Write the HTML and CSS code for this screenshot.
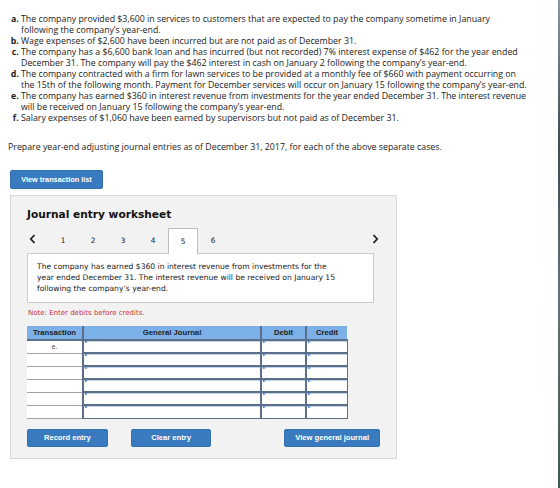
FILE: index.html
```html
<!DOCTYPE html>
<html lang="en">
<head>
    <meta charset="UTF-8">
    <meta name="viewport" content="width=device-width, initial-scale=1.0">
    <title>Adjusting Entries - Journal entry worksheet</title>
    <link rel="stylesheet" href="styles.css">
</head>
<body>
    <ol class="cases">
        <li>The company provided $3,600 in services to customers that are expected to pay the company sometime in January following the company’s year-end.</li>
        <li>Wage expenses of $2,600 have been incurred but are not paid as of December 31.</li>
        <li>The company has a $6,600 bank loan and has incurred (but not recorded) 7% interest expense of $462 for the year ended December 31. The company will pay the $462 interest in cash on January 2 following the company’s year-end.</li>
        <li>The company contracted with a firm for lawn services to be provided at a monthly fee of $660 with payment occurring on the 15th of the following month. Payment for December services will occur on January 15 following the company’s year-end.</li>
        <li>The company has earned $360 in interest revenue from investments for the year ended December 31. The interest revenue will be received on January 15 following the company’s year-end.</li>
        <li>Salary expenses of $1,060 have been earned by supervisors but not paid as of December 31.</li>
    </ol>

    <p class="prompt">Prepare year-end adjusting journal entries as of December 31, 2017, for each of the above separate cases.</p>

    <button class="btn btn-list" type="button">View transaction list</button>

    <section class="worksheet">
        <h2>Journal entry worksheet</h2>

        <nav class="steps">
            <span class="arrow">
                <svg width="7" height="10" viewBox="0 0 7 10"><path d="M5.5 1 L1.8 5 L5.5 9" fill="none" stroke="#222" stroke-width="1.8"/></svg>
            </span>
            <span class="step">1</span>
            <span class="step">2</span>
            <span class="step">3</span>
            <span class="step">4</span>
            <span class="step active">5</span>
            <span class="step">6</span>
            <span class="arrow next">
                <svg width="7" height="10" viewBox="0 0 7 10"><path d="M1.5 1 L5.2 5 L1.5 9" fill="none" stroke="#222" stroke-width="1.8"/></svg>
            </span>
        </nav>

        <div class="entry-desc">
            The company has earned $360 in interest revenue from investments for the year ended December 31. The interest revenue will be received on January 15 following the company’s year-end.
        </div>

        <p class="note">Note: Enter debits before credits.</p>

        <table class="journal">
            <colgroup>
                <col class="col-tr">
                <col class="col-gj">
                <col class="col-dr">
                <col class="col-cr">
            </colgroup>
            <thead>
                <tr>
                    <th>Transaction</th>
                    <th>General Journal</th>
                    <th>Debit</th>
                    <th>Credit</th>
                </tr>
            </thead>
            <tbody id="rows"></tbody>
        </table>

        <div class="actions">
            <button class="btn" type="button">Record entry</button>
            <button class="btn btn-clear" type="button">Clear entry</button>
            <button class="btn btn-view" type="button">View general journal</button>
        </div>
    </section>

    <script>
        // six input rows, only the first one carries the transaction letter
        const rows = document.getElementById('rows');
        for (let i = 0; i < 6; i++) {
            const tr = document.createElement('tr');
            tr.innerHTML = '<td class="letter">' + (i === 0 ? 'e.' : '') + '</td>' +
                '<td class="field"></td><td class="field"></td><td class="field"></td>';
            rows.appendChild(tr);
        }
    </script>
</body>
</html>
```

FILE: styles.css
```css
html, body {
    margin: 0;
    height: 100%;
}

body {
    font-family: "Open Sans", "Liberation Sans", sans-serif;
    color: #222;
    background: linear-gradient(#8a98a6, #3d4b57 30%, #66717c 60%, #3f5a4c) right top / 2px 100% no-repeat, #fff;
    padding: 14px 0 0 0;
    box-sizing: border-box;
}

.cases {
    margin: 0;
    padding: 0 32px 0 21px;
    font-size: 8.8px;
    line-height: 11px;
    list-style: lower-alpha;
}

.cases li::marker {
    font-weight: bold;
}

.prompt {
    margin: 18px 0 0 8px;
    font-size: 8.8px;
    line-height: 11px;
}

.btn {
    display: inline-block;
    height: 18px;
    padding: 0;
    border: 1px solid #3570b0;
    border-radius: 2px;
    background-color: #3a7bc0;
    color: white;
    font-family: "Liberation Sans", Arial, sans-serif;
    font-size: 7.6px;
    font-weight: bold;
    cursor: pointer;
}

.btn-list {
    display: block;
    width: 93px;
    height: 19px;
    margin: 17px 0 0 10px;
    font-size: 7.3px;
}

.worksheet {
    width: 387px;
    height: 264px;
    margin: 6px 0 0 10px;
    padding: 11px 16px 0 16px;
    box-sizing: border-box;
    border: 1px solid #d8d8d8;
    background-color: #f2f2f2;
}

.worksheet h2 {
    margin: 0;
    font-family: "DejaVu Sans", Verdana, sans-serif;
    font-size: 10.6px;
    line-height: 14px;
    color: #111;
}

.steps {
    display: flex;
    align-items: center;
    height: 25px;
    margin-top: 7px;
    font-family: "DejaVu Sans", Verdana, sans-serif;
    font-size: 7.4px;
    color: #222;
}

.steps .arrow {
    display: flex;
    align-items: center;
    width: 21px;
    height: 25px;
    padding: 0 0 3px 2px;
    box-sizing: border-box;
}

.steps .arrow.next {
    margin-left: auto;
    width: 10px;
}

.step {
    width: 30px;
    height: 25px;
    line-height: 25px;
    text-align: center;
    box-sizing: border-box;
}

.step.active {
    border: 1px solid #bdbdbd;
    border-bottom: none;
    background-color: white;
    position: relative;
    z-index: 1;
    height: 26px;
    margin-bottom: -1px;
}

.entry-desc {
    width: 347px;
    padding: 7px 31px 8px 9px;
    box-sizing: border-box;
    border: 1px solid #cccccc;
    background-color: white;
    font-family: "DejaVu Sans", Verdana, sans-serif;
    font-size: 7.6px;
    line-height: 11px;
    color: #222;
}

.note {
    margin: 5px 0 0 1px;
    font-family: "DejaVu Sans", Verdana, sans-serif;
    font-size: 7px;
    line-height: 10px;
    color: #c8333a;
}

.journal {
    width: 320px;
    margin-top: 8px;
    border-collapse: collapse;
    table-layout: fixed;
    font-family: "Liberation Sans", Arial, sans-serif;
    font-size: 7.7px;
}

.col-tr { width: 56px; }
.col-gj { width: 178px; }
.col-dr { width: 45px; }
.col-cr { width: 41px; }

.journal th {
    height: 13px;
    padding: 0;
    background-color: #7cb0e8;
    border-bottom: 2px solid #5b6f88;
    color: #222;
    font-weight: bold;
}

.journal th + th {
    border-left: 2px solid #5b6f88;
}

.journal tbody tr {
    height: 13px;
}

.journal td {
    padding: 0;
    background-color: white;
}

.journal td.letter {
    border-bottom: 1px solid #a3a3a3;
    text-align: center;
    color: #444;
    font-size: 6.5px;
    line-height: 8px;
}

.journal td.field {
    position: relative;
    border: 1px solid #5b6f88;
    border-left-width: 2px;
    border-top-width: 2px;
    box-shadow: inset 0 1px 0 #c4d5ea;
}

/* little blue marker in the corner of each input cell */
.journal td.field::before {
    content: "";
    position: absolute;
    top: 0;
    left: 1px;
    border-left: 3px solid #2f7ad8;
    border-top: 1.5px solid transparent;
    border-bottom: 1.5px solid transparent;
}

.actions {
    display: flex;
    margin-top: 10px;
}

.actions .btn {
    width: 81px;
}

.actions .btn-clear {
    margin-left: 23px;
}

.actions .btn-view {
    width: 96px;
    margin-left: 73px;
}
```
